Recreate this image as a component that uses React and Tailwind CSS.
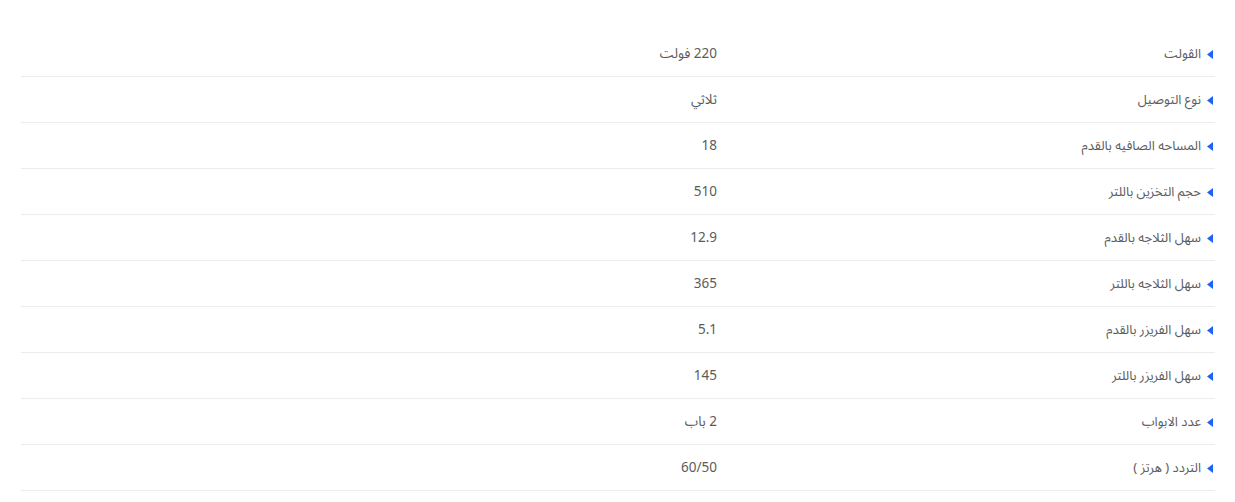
import React from "react";

const rows = [
  ["الڤولت", "220 فولت"],
  ["نوع التوصيل", "ثلاثي"],
  ["المساحه الصافيه بالقدم", "18"],
  ["حجم التخزين باللتر", "510"],
  ["سهل الثلاجه بالقدم", "12.9"],
  ["سهل الثلاجه باللتر", "365"],
  ["سهل الفريزر بالقدم", "5.1"],
  ["سهل الفريزر باللتر", "145"],
  ["عدد الابواب", "2 باب"],
  ["التردد ( هرتز )", "60/50"],
];

export default function App() {
  return (
    <div
      dir="rtl"
      className="bg-white w-[1235px] h-[502px] pt-[31px] pr-[20px] pl-[21px]"
      style={{ fontFamily: '"Noto Sans Arabic", "DejaVu Sans", "Noto Sans", sans-serif' }}
    >
      {rows.map(([k, v], i) => (
        <div
          key={i}
          className="flex items-center h-[46px] pt-[2px] border-b border-[#ececec] text-[13px] text-[#5c5c5c]"
        >
          <div className="w-[498px] flex items-center gap-[6px] pr-[2px]">
            <svg width="6" height="9" viewBox="0 0 6 9" className="shrink-0">
              <polygon points="6,0 6,9 0,4.5" fill="#1e63f5" />
            </svg>
            <span>{k}</span>
          </div>
          <div className="flex-1 text-[13.5px]">{v}</div>
        </div>
      ))}
    </div>
  );
}
